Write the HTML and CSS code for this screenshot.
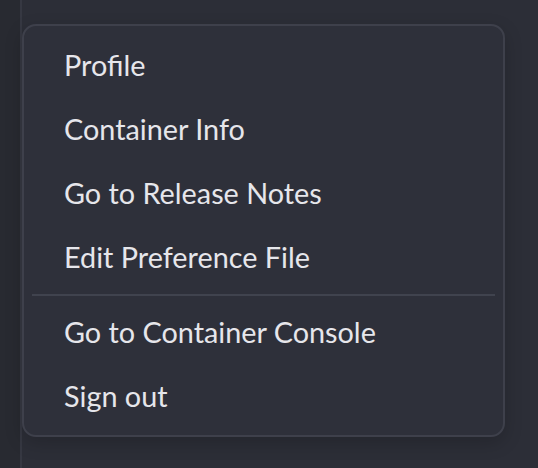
FILE: index.html
```html
<!DOCTYPE html>
<html>
<head>
<meta charset="utf-8">
<link rel="stylesheet" href="styles.css">
</head>
<body>
<div class="page">
  <aside class="sidebar"></aside>
  <main class="main"></main>
  <nav class="menu">
    <ul class="menu-list">
      <li class="menu-item">Profile</li>
      <li class="menu-item">Container Info</li>
      <li class="menu-item">Go to Release Notes</li>
      <li class="menu-item">Edit Preference File</li>
    </ul>
    <div class="menu-divider"></div>
    <ul class="menu-list">
      <li class="menu-item">Go to Container Console</li>
      <li class="menu-item">Sign out</li>
    </ul>
  </nav>
</div>
</body>
</html>
```
FILE: styles.css
```css
html, body {
  margin: 0;
  padding: 0;
  height: 100%;
  background: #2c2e37;
}
.page {
  position: relative;
  display: flex;
  width: 538px;
  height: 468px;
  overflow: hidden;
  font-family: Lato, "Liberation Sans", sans-serif;
}
.sidebar {
  width: 20px;
  flex: none;
  background: #282a31;
  border-right: 2px solid #363842;
}
.main {
  flex: 1;
  background: #2c2e37;
}
.menu {
  position: absolute;
  left: 22px;
  top: 24px;
  width: 483px;
  height: 413px;
  box-sizing: border-box;
  background: #2e303a;
  border: 2px solid #3e404b;
  border-radius: 14px;
  padding: 7px 0 7px 0;
  box-shadow: 0 6px 18px rgba(0, 0, 0, 0.18);
}
.menu-list {
  list-style: none;
  margin: 0;
  padding: 0;
}
.menu-item {
  height: 64px;
  line-height: 64px;
  padding-left: 40px;
  font-size: 28.8px;
  color: #e6e6eb;
  white-space: nowrap;
}
.menu-divider {
  height: 2px;
  margin: 5px 8px 4px 8px;
  background: #40434e;
}
```
